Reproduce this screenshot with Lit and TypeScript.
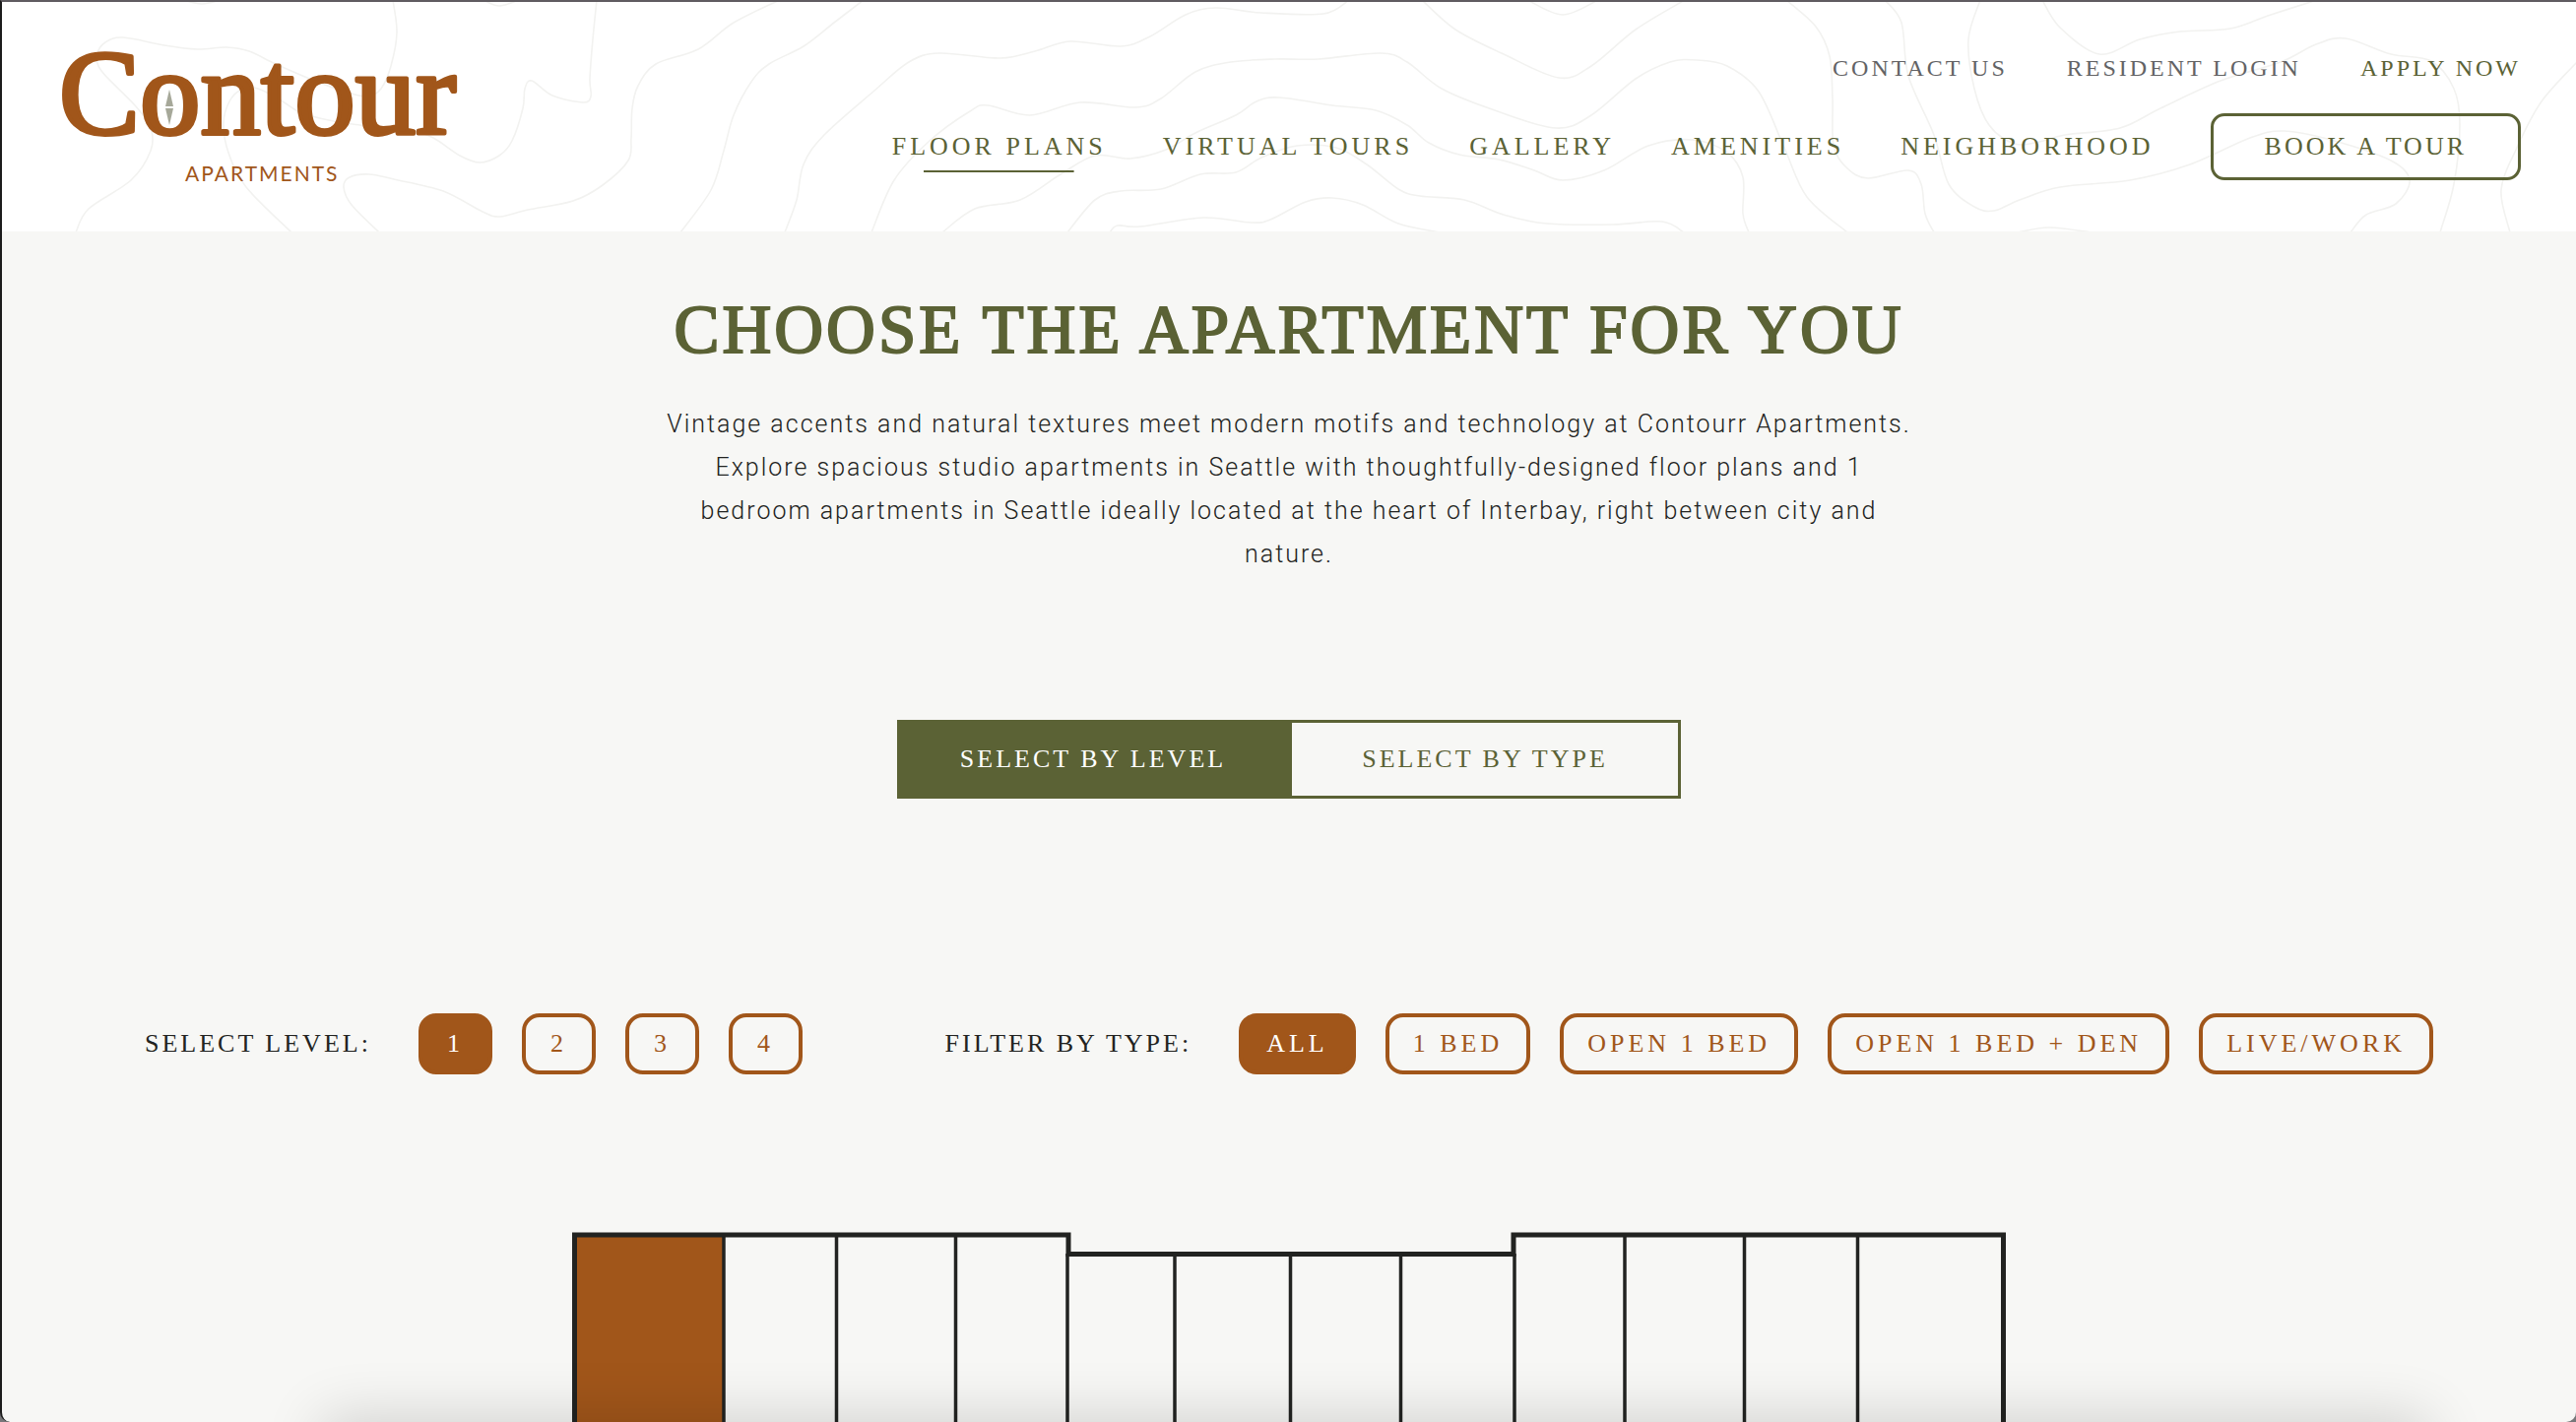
import { LitElement, html, svg, css } from "lit";
import { customElement, state } from "lit/decorators.js";
import { classMap } from "lit/directives/class-map.js";

type Point = [number, number];

/** Topographic lines of the header background, each as a list of x, y pairs. */
const CONTOURS: number[][] = [
  [186, 0, 205, 4, 224, 0],
  [399, 0, 403, 33, 397, 67, 387, 90, 373, 98, 350, 93, 317, 81, 280, 65, 253, 52, 230, 48, 200, 50, 167, 46, 125, 38, 107, 43, 99, 55, 103, 72, 137, 107, 153, 130, 153, 153, 133, 183, 90, 212, 77, 236],
  [296, 236, 250, 190, 232, 155, 227, 125, 233, 103, 245, 91, 262, 90, 287, 103, 307, 115, 350, 125, 417, 133, 440, 140, 467, 158, 487, 165, 507, 158, 520, 143, 531, 110, 533, 90, 540, 82, 561, 97, 592, 104, 600, 98, 599, 80, 602, 40, 606, 0],
  [385, 236, 357, 208, 349, 190, 355, 180, 375, 177, 400, 182, 450, 194, 490, 215, 508, 220, 536, 213, 582, 204, 612, 188, 638, 163, 641, 140, 642, 110, 648, 87, 666, 65, 709, 50, 745, 23, 792, 0],
  [491, 0, 507, 6, 527, 0],
  [691, 236, 722, 193, 735, 153, 745, 117, 763, 83, 781, 65, 816, 47, 847, 23, 877, 0],
  [797, 236, 809, 203, 816, 167, 837, 137, 888, 92, 923, 63, 954, 54, 1015, 59, 1051, 52, 1087, 42, 1138, 47, 1168, 37, 1204, 15, 1235, 8, 1281, 13, 1344, 14, 1370, 0],
  [885, 236, 908, 183, 944, 143, 985, 113, 1003, 107, 1046, 117, 1097, 104, 1153, 109, 1179, 100, 1214, 73, 1250, 63, 1295, 60, 1339, 60, 1402, 54, 1429, 63, 1464, 90, 1518, 112, 1580, 130, 1616, 117, 1661, 80, 1696, 63, 1723, 61, 1754, 67, 1786, 93, 1812, 150, 1835, 200, 1876, 236],
  [957, 236, 990, 212, 1036, 203, 1077, 177, 1112, 158, 1148, 161, 1184, 152, 1214, 135, 1255, 117, 1276, 103, 1299, 99, 1353, 107, 1397, 112, 1429, 127, 1451, 145, 1482, 157, 1522, 162, 1558, 173, 1587, 183, 1629, 173, 1674, 148, 1719, 142, 1754, 155, 1770, 180, 1770, 217, 1776, 236],
  [1084, 236, 1112, 203, 1138, 194, 1179, 192, 1219, 177, 1255, 175, 1281, 160, 1317, 148, 1357, 150, 1388, 167, 1420, 192, 1442, 199, 1487, 203, 1527, 218, 1571, 227, 1638, 228, 1688, 225, 1710, 236],
  [1127, 236, 1135, 229, 1158, 230, 1222, 221, 1270, 226, 1290, 223, 1326, 205, 1353, 201, 1384, 208, 1420, 227, 1462, 236],
  [1444, 0, 1478, 30, 1527, 55, 1583, 79, 1616, 67, 1661, 30, 1711, 0],
  [1551, 0, 1587, 15, 1623, 0],
  [1814, 0, 1844, 27, 1858, 57, 1861, 100, 1862, 147, 1875, 170, 1897, 181, 1938, 173, 1951, 187, 1955, 217, 1964, 236],
  [1914, 0, 1931, 23, 1938, 77, 1964, 137, 1979, 187, 2005, 210, 2025, 214, 2051, 203, 2092, 190, 2163, 183, 2224, 167, 2285, 140, 2319, 133, 2367, 142, 2428, 163, 2447, 183, 2433, 207, 2403, 218, 2387, 236],
  [2011, 0, 1999, 40, 2005, 90, 2020, 127, 2046, 146, 2071, 144, 2097, 137, 2153, 130, 2194, 110, 2255, 82, 2316, 63, 2352, 45, 2382, 39, 2428, 55, 2469, 62, 2492, 90, 2498, 127, 2492, 187, 2478, 236],
  [2074, 0, 2092, 28, 2132, 55, 2173, 40, 2214, 32, 2265, 29, 2306, 15, 2353, 0],
  [2620, 60, 2581, 103, 2556, 150, 2540, 193, 2549, 236],
  [2049, 236, 2081, 231, 2124, 236],
];

/** Runs a smooth curve through the points. */
function smoothPath(flat: number[]): string {
  const pts: Point[] = [];
  for (let i = 0; i < flat.length; i += 2) pts.push([flat[i], flat[i + 1]]);
  let d = `M${pts[0][0]} ${pts[0][1]}`;
  for (let i = 0; i < pts.length - 1; i++) {
    const a = pts[Math.max(i - 1, 0)];
    const b = pts[i];
    const c = pts[i + 1];
    const e = pts[Math.min(i + 2, pts.length - 1)];
    d += `C${b[0] + (c[0] - a[0]) / 6} ${b[1] + (c[1] - a[1]) / 6} ${c[0] - (e[0] - b[0]) / 6} ${c[1] - (e[1] - b[1]) / 6} ${c[0]} ${c[1]}`;
  }
  return d;
}

const CONTOUR_PATH = CONTOURS.map(smoothPath).join("");

@customElement("site-logo")
class SiteLogo extends LitElement {
  static styles = css`
    :host {
      display: block;
    }
    .mark {
      display: block;
      overflow: visible;
    }
    .name {
      font-family: "Liberation Serif", "Times New Roman", serif;
      font-size: 123px;
      letter-spacing: 0;
      fill: #a1561a;
      stroke: #a1561a;
      stroke-width: 4px;
      stroke-linejoin: round;
    }
    .kind {
      font-family: Lato, "Open Sans", sans-serif;
      font-size: 21px;
      letter-spacing: 2px;
      fill: #a1561a;
    }
    .needle {
      fill: #a6a899;
    }
  `;

  render() {
    return html`
      <svg class="mark" width="406" height="130" viewBox="0 0 406 130" role="img" aria-label="Contour Apartments">
        <text class="name" x="-2" y="83">Contour</text>
        <polygon class="needle" points="110,38 114,55 106,55"></polygon>
        <polygon class="needle" points="106,57 114,57 110,74"></polygon>
        <text class="kind" x="126" y="131">APARTMENTS</text>
      </svg>
    `;
  }
}

@customElement("site-header")
class SiteHeader extends LitElement {
  static styles = css`
    :host {
      display: block;
    }
    .header {
      position: relative;
      display: flex;
      justify-content: space-between;
      align-items: flex-start;
      padding: 51px 56px 52px 60px;
      background: #fff;
      overflow: hidden;
      font-family: "Liberation Serif", "Times New Roman", serif;
    }
    .contours {
      position: absolute;
      inset: 0;
      width: 100%;
      height: 100%;
      fill: none;
      stroke: #f2f2f0;
      stroke-width: 1.6;
    }
    .logo {
      position: relative;
      display: block;
    }
    .menus {
      position: relative;
      display: flex;
      flex-direction: column;
      align-items: flex-end;
      gap: 30px;
    }
    .row {
      display: flex;
      align-items: center;
    }
    .utility {
      gap: 60px;
      font-size: 24px;
      line-height: 32px;
      letter-spacing: 3px;
    }
    .primary {
      gap: 57px;
      font-size: 26px;
      line-height: 52px;
      letter-spacing: 4px;
    }
    .link {
      color: #5b6235;
      text-decoration: none;
      white-space: nowrap;
    }
    .muted {
      color: #636365;
    }
    .current {
      background: linear-gradient(#5b6235, #5b6235) center bottom / 70% 2px no-repeat;
    }
    .cta {
      padding: 5px 52px;
      border: 3px solid #5b6235;
      border-radius: 14px;
      letter-spacing: 3px;
    }
  `;

  private links = ["Virtual Tours", "Gallery", "Amenities", "Neighborhood"];

  render() {
    return html`
      <header class="header">
        <svg class="contours" viewBox="2 2 2614 233" preserveAspectRatio="xMidYMin slice" aria-hidden="true">
          ${svg`<path d=${CONTOUR_PATH}></path>`}
        </svg>
        <a class="logo" href="#home"><site-logo></site-logo></a>
        <div class="menus">
          <nav class="row utility" aria-label="Utility">
            <a class="link muted" href="#contact">CONTACT US</a>
            <a class="link muted" href="#login">RESIDENT LOGIN</a>
            <a class="link" href="#apply">APPLY NOW</a>
          </nav>
          <nav class="row primary" aria-label="Main">
            <a class="link current" href="#floor-plans" aria-current="page">FLOOR PLANS</a>
            ${this.links.map((name) => html`<a class="link" href="#${name.toLowerCase().replace(" ", "-")}">${name.toUpperCase()}</a>`)}
            <a class="link cta" href="#tour">BOOK A TOUR</a>
          </nav>
        </div>
      </header>
    `;
  }
}

@customElement("floor-plan")
class FloorPlan extends LitElement {
  static styles = css`
    :host {
      display: block;
    }
    .plan {
      display: block;
      width: 100%;
    }
    .wall {
      fill: none;
      stroke: #222321;
      stroke-width: 5;
    }
    .divider {
      fill: none;
      stroke: #222321;
      stroke-width: 3.5;
    }
    .unit {
      fill: #a1561a;
    }
  `;

  private dividers = [154, 268.5, 389.5, 612, 729.5, 841.5, 1069, 1190.5, 1305.5];

  render() {
    return html`
      <svg class="plan" viewBox="0 0 1456 400" role="img" aria-label="Level floor plan">
        <rect class="unit" x="3" y="3" width="151" height="400"></rect>
        ${this.dividers.map((x) => svg`<path class="divider" d="M${x} ${x > 504 && x < 956 ? 22 : 3}V400"></path>`)}
        <path class="divider" d="M503 22V400M957 22V400"></path>
        <path class="wall" d="M2.5 400V3H504V22.500H956V3H1453.500V400"></path>
      </svg>
    `;
  }
}

@customElement("app-root")
class AppRoot extends LitElement {
  static styles = css`
    :host {
      display: block;
      background: #77777a;
    }
    .frame {
      position: relative;
      box-sizing: border-box;
      height: 100vh;
      overflow: hidden;
      border-top: 2px solid #605c61;
      border-left: 2px solid #1c1c1c;
      border-radius: 0 0 10px 10px;
      background: #f7f7f5;
      color: #222321;
      font-family: "Liberation Serif", "Times New Roman", serif;
      font-size: 26px;
      letter-spacing: 3px;
    }
    .content {
      display: flex;
      flex-direction: column;
      align-items: center;
      padding-top: 60px;
    }
    .title {
      margin: 0;
      color: #5b6235;
      font-size: 69px;
      font-weight: 400;
      line-height: 80px;
      letter-spacing: 3px;
      -webkit-text-stroke: 2px #5b6235;
      text-align: center;
    }
    .intro {
      max-width: 1268px;
      margin: 34px 0 0;
      font-family: Roboto, "Open Sans", sans-serif;
      font-size: 25px;
      font-weight: 300;
      line-height: 44px;
      letter-spacing: 2px;
      text-align: center;
    }
    .toggle {
      display: grid;
      grid-template-columns: 1fr 1fr;
      width: 796px;
      max-width: 100%;
      margin-top: 146px;
    }
    button {
      font: inherit;
      cursor: pointer;
    }
    .tab {
      height: 80px;
      padding: 0;
      border: 3px solid #5b6235;
      background: transparent;
      color: #5b6235;
      letter-spacing: 3px;
    }
    .tab.on {
      background: #5b6235;
      color: #fff;
    }
    .filters {
      display: flex;
      flex-wrap: wrap;
      justify-content: space-between;
      align-self: stretch;
      gap: 30px;
      margin-top: 218px;
      padding: 0 145px;
    }
    .group {
      display: flex;
      align-items: center;
      gap: 30px;
    }
    .label {
      margin-right: 18px;
    }
    .chip {
      min-width: 75px;
      height: 62px;
      padding: 0 24px;
      border: 4px solid #a1561a;
      border-radius: 18px;
      background: transparent;
      color: #a1561a;
      letter-spacing: 4px;
      white-space: nowrap;
    }
    .chip.on {
      background: #a1561a;
      color: #fff;
    }
    .plan {
      width: 1456px;
      max-width: 100%;
      margin-top: 160px;
    }
    .shade {
      position: absolute;
      top: 100%;
      left: 325px;
      right: 150px;
      height: 80px;
      box-shadow: 0 -4px 60px rgba(0, 0, 0, 0.16);
    }
  `;

  @state() private mode = "LEVEL";
  @state() private level = "1";
  @state() private type = "ALL";

  private chip(name: string, current: string, pick: (value: string) => void) {
    const on = name === current;
    return html`<button type="button" class=${classMap({ chip: true, on })} aria-pressed=${on} @click=${() => pick(name)}>${name}</button>`;
  }

  render() {
    return html`
      <div class="frame">
        <site-header></site-header>
        <main class="content">
          <h1 class="title">CHOOSE THE APARTMENT FOR YOU</h1>
          <p class="intro">
            Vintage accents and natural textures meet modern motifs and technology at Contourr Apartments. Explore
            spacious studio apartments in Seattle with thoughtfully-designed floor plans and 1 bedroom apartments in
            Seattle ideally located at the heart of Interbay, right between city and nature.
          </p>
          <div class="toggle">
            ${["LEVEL", "TYPE"].map(
              (mode) => html`<button
                type="button"
                class=${classMap({ tab: true, on: mode === this.mode })}
                aria-pressed=${mode === this.mode}
                @click=${() => (this.mode = mode)}
              >SELECT BY ${mode}</button>`,
            )}
          </div>
          <div class="filters">
            <div class="group" role="group" aria-labelledby="level-label">
              <span class="label" id="level-label">SELECT LEVEL:</span>
              ${["1", "2", "3", "4"].map((n) => this.chip(n, this.level, (v) => (this.level = v)))}
            </div>
            <div class="group" role="group" aria-labelledby="type-label">
              <span class="label" id="type-label">FILTER BY TYPE:</span>
              ${["ALL", "1 BED", "OPEN 1 BED", "OPEN 1 BED + DEN", "LIVE/WORK"].map((n) =>
                this.chip(n, this.type, (v) => (this.type = v)),
              )}
            </div>
          </div>
          <floor-plan class="plan"></floor-plan>
        </main>
        <div class="shade"></div>
      </div>
    `;
  }
}
